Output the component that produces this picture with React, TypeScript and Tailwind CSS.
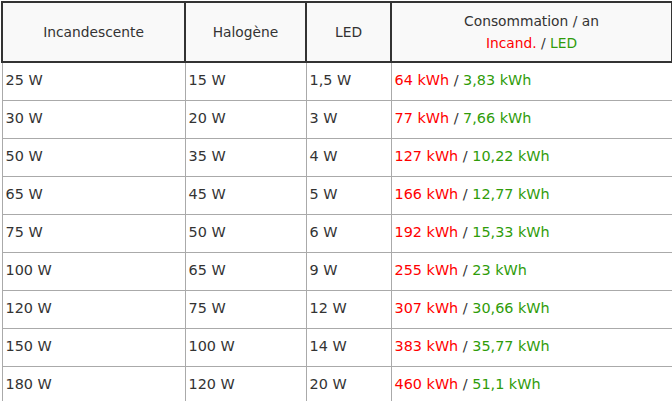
import React from 'react';

const rows: [string, string, string, string, string][] = [
  ['25 W', '15 W', '1,5 W', '64 kWh', '3,83 kWh'],
  ['30 W', '20 W', '3 W', '77 kWh', '7,66 kWh'],
  ['50 W', '35 W', '4 W', '127 kWh', '10,22 kWh'],
  ['65 W', '45 W', '5 W', '166 kWh', '12,77 kWh'],
  ['75 W', '50 W', '6 W', '192 kWh', '15,33 kWh'],
  ['100 W', '65 W', '9 W', '255 kWh', '23 kWh'],
  ['120 W', '75 W', '12 W', '307 kWh', '30,66 kWh'],
  ['150 W', '100 W', '14 W', '383 kWh', '35,77 kWh'],
  ['180 W', '120 W', '20 W', '460 kWh', '51,1 kWh'],
];

export default function App() {
  const th = 'border-2 border-[#333] font-normal text-center align-middle text-[13.8px]';
  const td = 'border border-[#aaa] h-[38px] px-[3px] align-middle text-[14.4px]';
  return (
    <div className="w-[672px] h-[401px] bg-white pl-px pt-px font-['DejaVu_Sans',Verdana,sans-serif] text-[#333]">
      <table className="w-[670px] border-collapse table-fixed">
        <colgroup>
          <col className="w-[183px]" />
          <col className="w-[121px]" />
          <col className="w-[85px]" />
          <col className="w-[281px]" />
        </colgroup>
        <thead>
          <tr className="h-[60px] bg-[#f9f9f9]">
            <th className={th}>Incandescente</th>
            <th className={th}>Halogène</th>
            <th className={th}>LED</th>
            <th className={th + ' leading-[22px]'}>
              <div>Consommation / an</div>
              <div>
                <span className="text-[#ff0000]">Incand.</span> /{' '}
                <span className="text-[#2f9c0a]">LED</span>
              </div>
            </th>
          </tr>
        </thead>
        <tbody>
          {rows.map((r, i) => (
            <tr key={i}>
              <td className={td}>{r[0]}</td>
              <td className={td}>{r[1]}</td>
              <td className={td}>{r[2]}</td>
              <td className={td}>
                <span className="text-[#ff0000]">{r[3]}</span> /{' '}
                <span className="text-[#2f9c0a]">{r[4]}</span>
              </td>
            </tr>
          ))}
        </tbody>
      </table>
    </div>
  );
}
